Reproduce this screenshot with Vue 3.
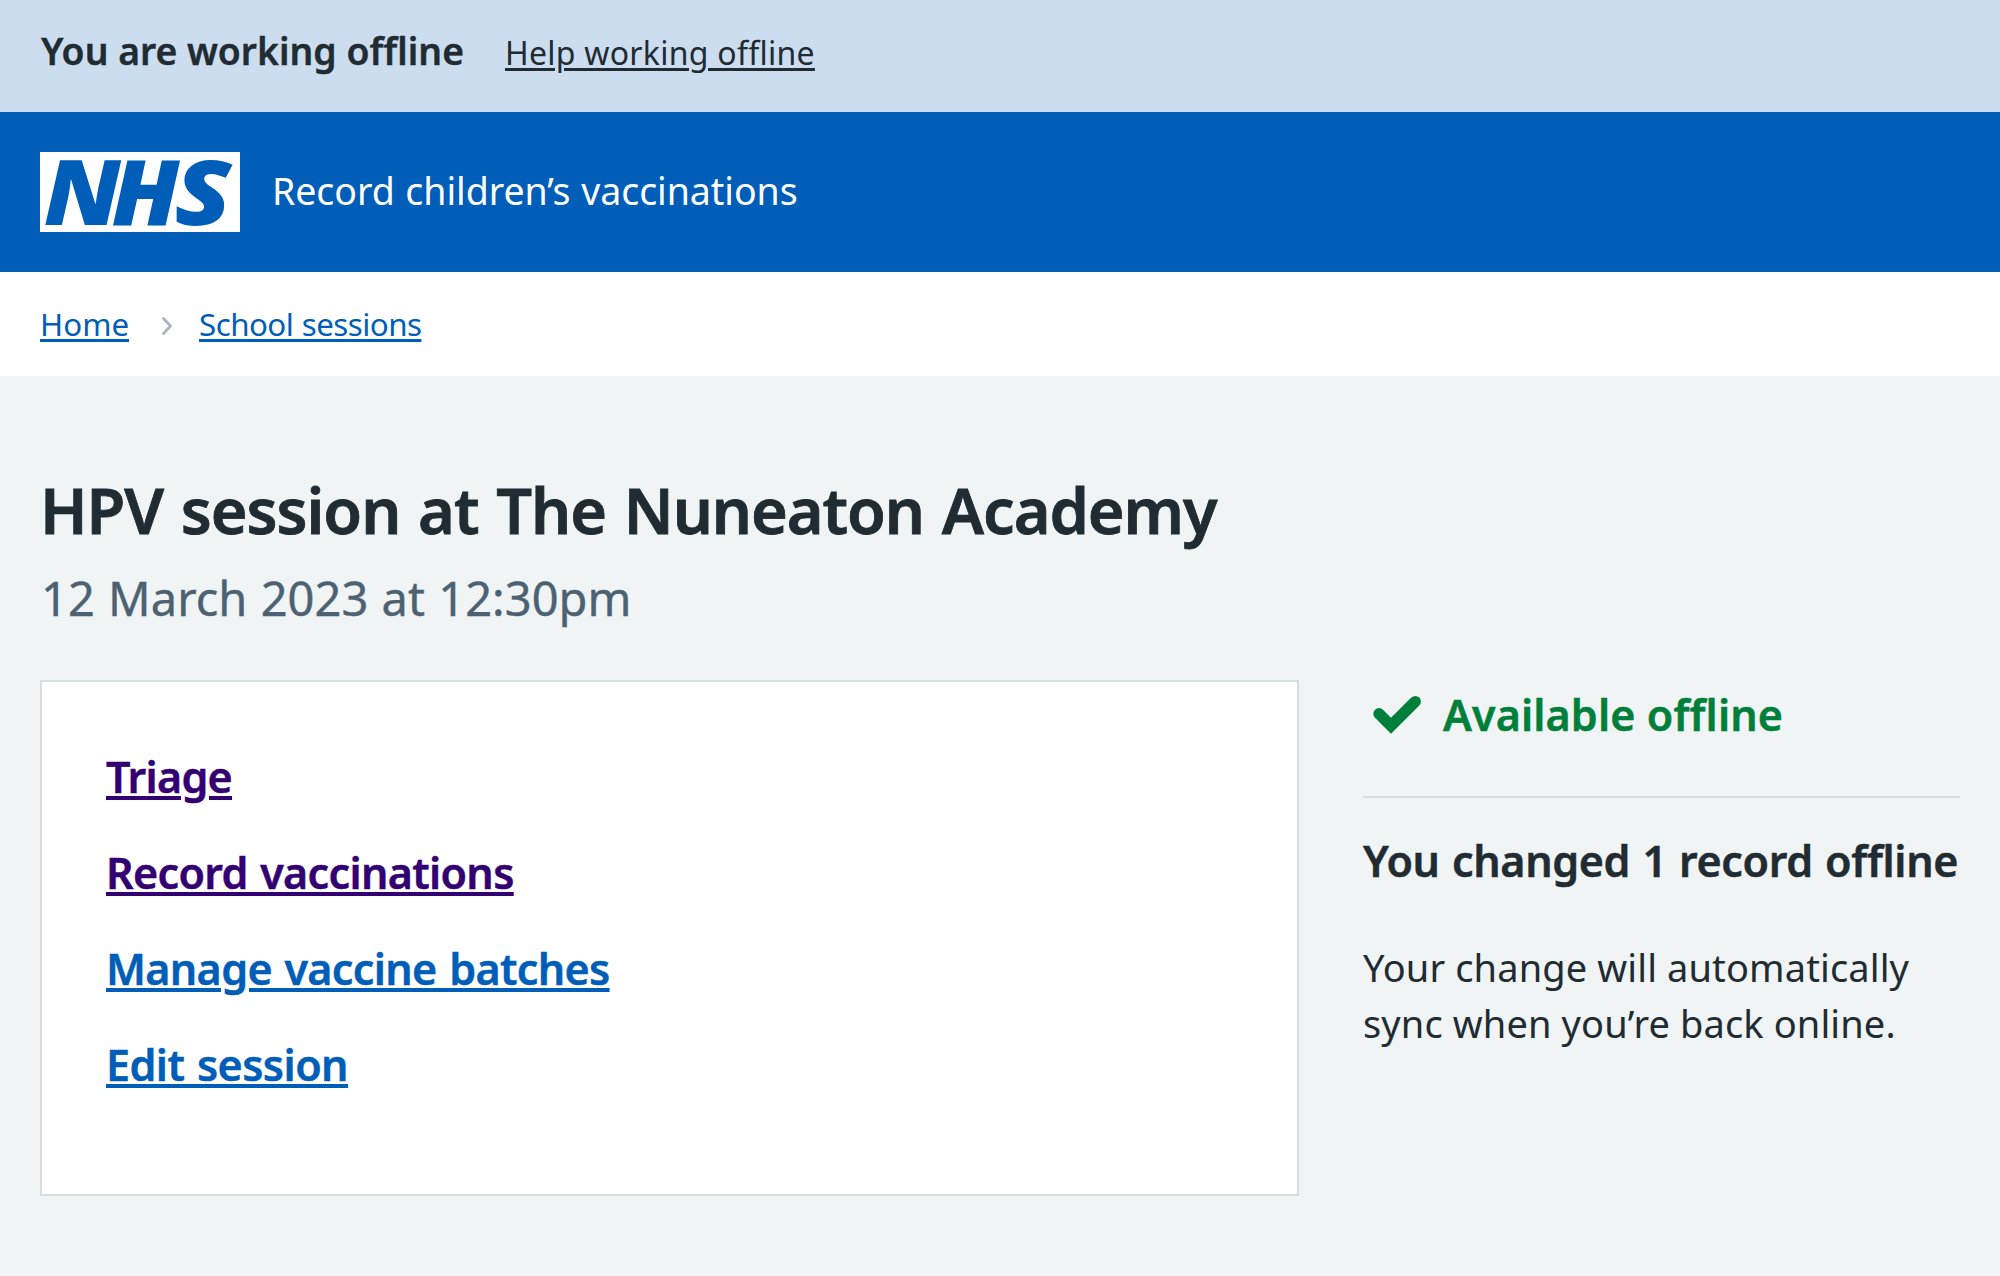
<script setup>
const links = [
  { text: 'Triage', visited: true, cls: 'triage' },
  { text: 'Record vaccinations', visited: true, cls: 'record' },
  { text: 'Manage vaccine batches', visited: false, cls: 'batches' },
  { text: 'Edit session', visited: false, cls: 'edit' },
]
</script>

<template>
  <div class="page">
    <div class="offline-bar">
      <strong class="offline-title">You are working offline</strong>
      <a class="offline-help">Help working offline</a>
    </div>

    <header class="header">
      <svg class="logo" viewBox="0 0 200 80" role="img" aria-label="NHS">
        <rect width="200" height="80" fill="#fff" />
        <g class="logo-text">
          <text x="3.7" y="72.5" textLength="77" lengthAdjust="spacingAndGlyphs">N</text>
          <text x="71.5" y="72.5" textLength="68" lengthAdjust="spacingAndGlyphs">H</text>
          <text x="134.5" y="72.5" textLength="57" lengthAdjust="spacingAndGlyphs">S</text>
        </g>
      </svg>
      <span class="service">Record children’s vaccinations</span>
    </header>

    <nav class="breadcrumb">
      <a>Home</a>
      <svg class="chevron" width="12" height="20" viewBox="0 0 12 20">
        <path d="M2.5 2.5 9.5 10 2.5 17.5" fill="none" stroke="#aeb7bd" stroke-width="3" stroke-linecap="round" stroke-linejoin="round" />
      </svg>
      <a class="crumb-sessions">School sessions</a>
    </nav>

    <main class="main">
      <h1>HPV session at The Nuneaton Academy</h1>
      <p class="date">12 March 2023 at 12:30pm</p>

      <div class="columns">
        <ul class="card">
          <li v-for="link in links" :key="link.text">
            <a :class="[link.cls, { visited: link.visited }]">{{ link.text }}</a>
          </li>
        </ul>

        <aside class="side">
          <div class="status">
            <svg class="check" width="50" height="40" viewBox="0 0 50 40">
              <path d="M7 18.7 19 30.7 43.3 6.6" fill="none" stroke="#007f3b" stroke-width="11.3" stroke-linecap="round" stroke-linejoin="miter" />
            </svg>
            <span>Available offline</span>
          </div>
          <h2>You changed 1 record offline</h2>
          <p class="sync">Your change will automatically<br />sync when you’re back online.</p>
        </aside>
      </div>
    </main>
  </div>
</template>

<style>
body {
  margin: 0;
}
</style>

<style scoped>
.page {
  display: flex;
  flex-direction: column;
  min-height: 1276px;
  box-sizing: border-box;
  background: #f0f4f5;
  color: #212b32;
  font-family: "Noto Sans", "Open Sans", sans-serif;
}
a {
  text-decoration: underline;
  text-decoration-thickness: 3px;
  text-underline-offset: 3px;
}
.offline-bar {
  display: flex;
  align-items: baseline;
  gap: 41px;
  height: 112px;
  box-sizing: border-box;
  padding: 23px 40px 0 41px;
  background: #ccddf0;
  line-height: 56px;
}
.offline-title {
  font-size: 37.3px;
  font-weight: 600;
  -webkit-text-stroke: 0.4px;
}
.offline-help {
  font-size: 32px;
  letter-spacing: 0.27px;
}
.header {
  display: flex;
  align-items: center;
  gap: 32px;
  height: 160px;
  padding: 0 40px;
  background: #005eb8;
}
.logo {
  width: 200px;
  height: 80px;
  overflow: visible;
}
.logo-text {
  fill: #005eb8;
  font-family: "Open Sans", sans-serif;
  font-style: italic;
  font-weight: 800;
  font-size: 91px;
}
.service {
  padding-bottom: 4px;
  color: #fff;
  font-size: 37.5px;
  letter-spacing: -0.05px;
  word-spacing: 1px;
}
.breadcrumb {
  display: flex;
  align-items: center;
  height: 104px;
  padding: 0 40px;
  background: #fff;
  color: #005eb8;
  font-size: 31.3px;
}
.chevron {
  margin: 4px 26px 0 32px;
}
.crumb-sessions {
  letter-spacing: -0.55px;
  word-spacing: 1px;
}
.main {
  padding: 94px 40px 0;
}
h1 {
  margin: 0;
  font-size: 63px;
  font-weight: 600;
  line-height: 80px;
  letter-spacing: -1.06px;
  word-spacing: 2.5px;
  -webkit-text-stroke: 0.8px;
}
.date {
  margin: 16px 0 50px 1px;
  color: #4c6272;
  font-size: 47px;
  line-height: 64px;
  letter-spacing: 0.04px;
  word-spacing: 1px;
  -webkit-text-stroke: 0.4px;
}
.columns {
  display: flex;
  gap: 64px;
}
.card {
  display: flex;
  flex-direction: column;
  gap: 40px;
  width: 1259px;
  height: 516px;
  box-sizing: border-box;
  margin: 0;
  padding: 67px 64px;
  list-style: none;
  background: #fff;
  border: 2px solid #d8dde0;
  color: #005eb8;
  font-size: 43px;
  font-weight: 600;
  line-height: 56px;
  -webkit-text-stroke: 0.5px;
}
.card a {
  text-decoration-thickness: 4px;
}
.visited {
  color: #330072;
}
.triage {
  letter-spacing: -0.73px;
}
.record {
  letter-spacing: -0.66px;
  word-spacing: 2px;
}
.batches {
  letter-spacing: -0.64px;
  word-spacing: 2px;
}
.edit {
  letter-spacing: -0.55px;
  word-spacing: 2px;
}
.side {
  flex: 1;
  padding-top: 7px;
}
.status {
  display: flex;
  align-items: center;
  gap: 21px;
  padding: 0 0 53px 9px;
  border-bottom: 2px solid #d8dde0;
  color: #007f3b;
  font-size: 43px;
  font-weight: 600;
  line-height: 56px;
  letter-spacing: 0.13px;
  -webkit-text-stroke: 0.5px;
}
h2 {
  margin: 35px 0 50px;
  font-size: 43px;
  font-weight: 600;
  line-height: 56px;
  letter-spacing: -0.35px;
  word-spacing: 1.5px;
  white-space: nowrap;
  -webkit-text-stroke: 0.5px;
}
.sync {
  margin: 0;
  font-size: 38px;
  line-height: 56px;
  letter-spacing: 0.12px;
}
</style>
